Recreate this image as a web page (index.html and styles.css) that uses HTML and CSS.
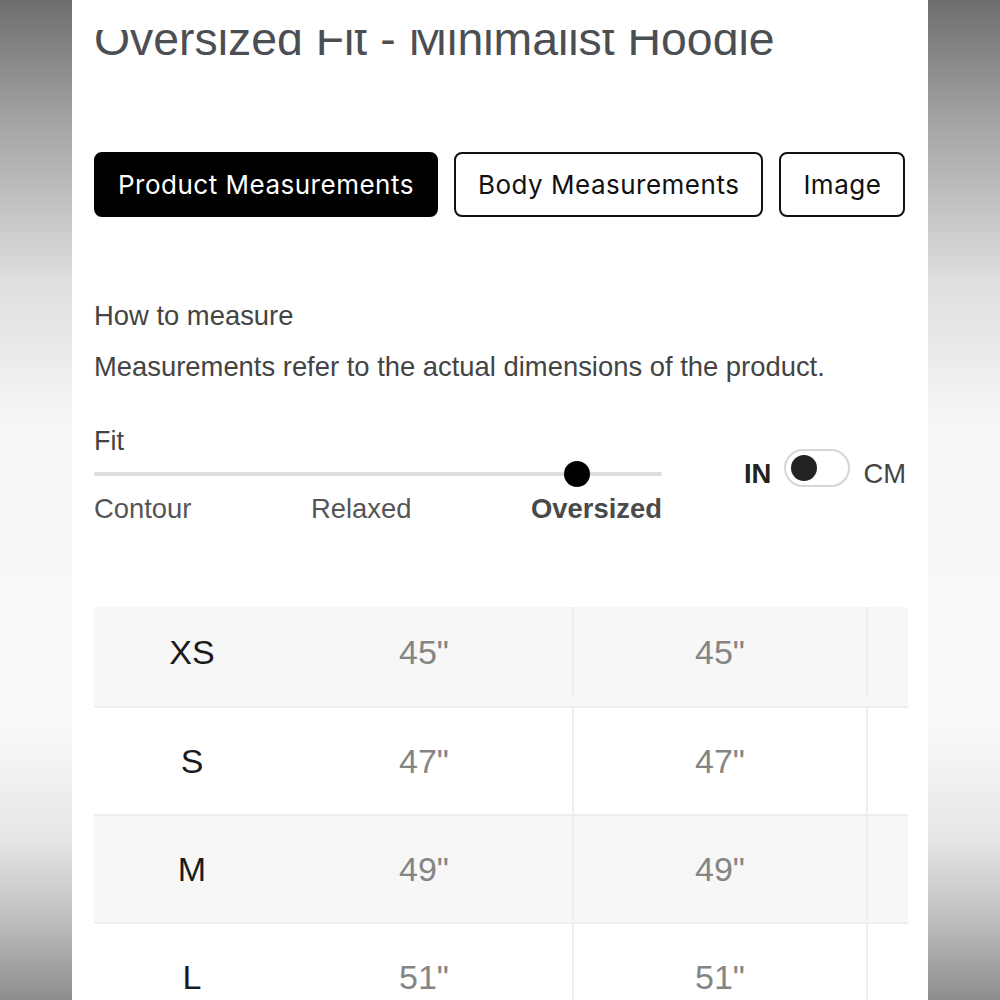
FILE: index.html
```html
<!DOCTYPE html>
<html lang="en">
<head>
<meta charset="utf-8">
<title>Size Guide</title>
<link rel="stylesheet" href="styles.css">
</head>
<body>
<main class="panel">
  <div class="title-clip">
    <h1 class="title">Oversized Fit - Minimalist Hoodie</h1>
  </div>

  <nav class="tabs">
    <button class="tab tab-active">Product Measurements</button>
    <button class="tab">Body Measurements</button>
    <button class="tab">Image</button>
  </nav>

  <p class="how">How to measure</p>
  <p class="desc">Measurements refer to the actual dimensions of the product.</p>

  <section class="fit-row">
    <div class="fit">
      <div class="fit-label">Fit</div>
      <div class="track"><span class="knob"></span></div>
      <div class="fit-scale">
        <span>Contour</span>
        <span>Relaxed</span>
        <span class="on">Oversized</span>
      </div>
    </div>
    <div class="unit">
      <span class="unit-in">IN</span>
      <span class="switch"><span class="switch-dot"></span></span>
      <span class="unit-cm">CM</span>
    </div>
  </section>

  <section class="grid">
    <div class="row first shade"><div class="c size">XS</div><div class="c v v2">45"</div><div class="c v v3">45"</div><div class="c v4"></div></div>
    <div class="row"><div class="c size">S</div><div class="c v v2">47"</div><div class="c v v3">47"</div><div class="c v4"></div></div>
    <div class="row shade"><div class="c size">M</div><div class="c v v2">49"</div><div class="c v v3">49"</div><div class="c v4"></div></div>
    <div class="row"><div class="c size">L</div><div class="c v v2">51"</div><div class="c v v3">51"</div><div class="c v4"></div></div>
  </section>
</main>
</body>
</html>
```

FILE: styles.css
```css
* { box-sizing: border-box; }

html, body {
  margin: 0;
  height: 1000px;
  overflow: hidden;
}

body {
  background: linear-gradient(to bottom,
    #6e6e6e 0%, #a3a3a3 12%, #dedede 28%, #f6f6f6 42%,
    #fafafa 72%, #e6e6e6 84%, #bebebe 92%, #8d8d8d 100%);
  font-family: "Liberation Sans", Arial, sans-serif;
}

.panel {
  width: 856px;
  height: 1000px;
  margin: 0 auto;
  background: #ffffff;
  padding: 0 22px;
  overflow: hidden;
}

.title-clip {
  margin-top: 30px;
  height: 40px;
  overflow: hidden;
}

.title {
  margin: -14px 0 0 0;
  font-size: 46.4px;
  line-height: 46px;
  font-weight: 400;
  color: #4b4e53;
  white-space: nowrap;
}

.tabs {
  margin-top: 82px;
  display: flex;
  gap: 16px;
}

.tab {
  flex: 0 0 auto;
  white-space: nowrap;
  height: 65px;
  padding: 0 22px;
  border: 2px solid #111111;
  border-radius: 8px;
  background: #ffffff;
  color: #111111;
  font-family: Inter, "Liberation Sans", sans-serif;
  font-size: 26px;
  letter-spacing: 0.5px;
}

.tab-active {
  background: #000000;
  border-color: #000000;
  color: #ffffff;
}

.how, .desc {
  margin: 0;
  font-size: 27.4px;
  line-height: 30px;
  color: #444444;
}

.how { margin-top: 84px; }
.desc { margin-top: 21px; }

.fit-row {
  margin-top: 44px;
  display: flex;
  justify-content: space-between;
}

.fit { width: 568px; }

.fit-label {
  font-size: 27px;
  line-height: 30px;
  color: #444444;
}

.track {
  position: relative;
  margin-top: 5px;
  height: 26px;
}

.track::before {
  content: "";
  position: absolute;
  left: 0;
  right: 0;
  top: 11px;
  height: 4px;
  border-radius: 2px;
  background: #dddddd;
}

.knob {
  position: absolute;
  left: 470px;
  top: 0;
  width: 26px;
  height: 26px;
  border-radius: 50%;
  background: #000000;
}

.fit-scale {
  margin-top: 7px;
  display: flex;
  justify-content: space-between;
  font-size: 27.4px;
  line-height: 30px;
  color: #555555;
}

.fit-scale .on {
  font-weight: 700;
  color: #4a4a4a;
}

.unit {
  margin-top: 23px;
  display: flex;
  align-items: center;
  gap: 13px;
  height: 38px;
}

.unit-in, .unit-cm {
  font-size: 27.4px;
  line-height: 30px;
  margin-top: 12px;
}

.unit-in { font-weight: 700; color: #222222; }
.unit-cm { color: #444444; }

.switch {
  position: relative;
  width: 66px;
  height: 38px;
  border: 2px solid #d6d6d6;
  border-radius: 19px;
  background: #ffffff;
}

.switch-dot {
  position: absolute;
  left: 5px;
  top: 4px;
  width: 26px;
  height: 26px;
  border-radius: 50%;
  background: #222222;
}

.grid {
  margin-top: 83px;
  width: 814px;
}

.row {
  display: grid;
  grid-template-columns: 196px 282px 296px 40px;
  height: 108px;
  border-bottom: 2px solid #eeeeee;
  background: #ffffff;
}

.row.first {
  height: 101px;
  padding-bottom: 8px;
}

.row.shade { background: #f7f7f7; }

.c {
  display: flex;
  align-items: center;
  justify-content: center;
  font-size: 34px;
}

.size { color: #1a1a1a; }

.v { color: #858585; }

.v2 { padding-right: 14px; }

.v3 {
  border-left: 2px solid #eeeeee;
  border-right: 2px solid #eeeeee;
}
```
